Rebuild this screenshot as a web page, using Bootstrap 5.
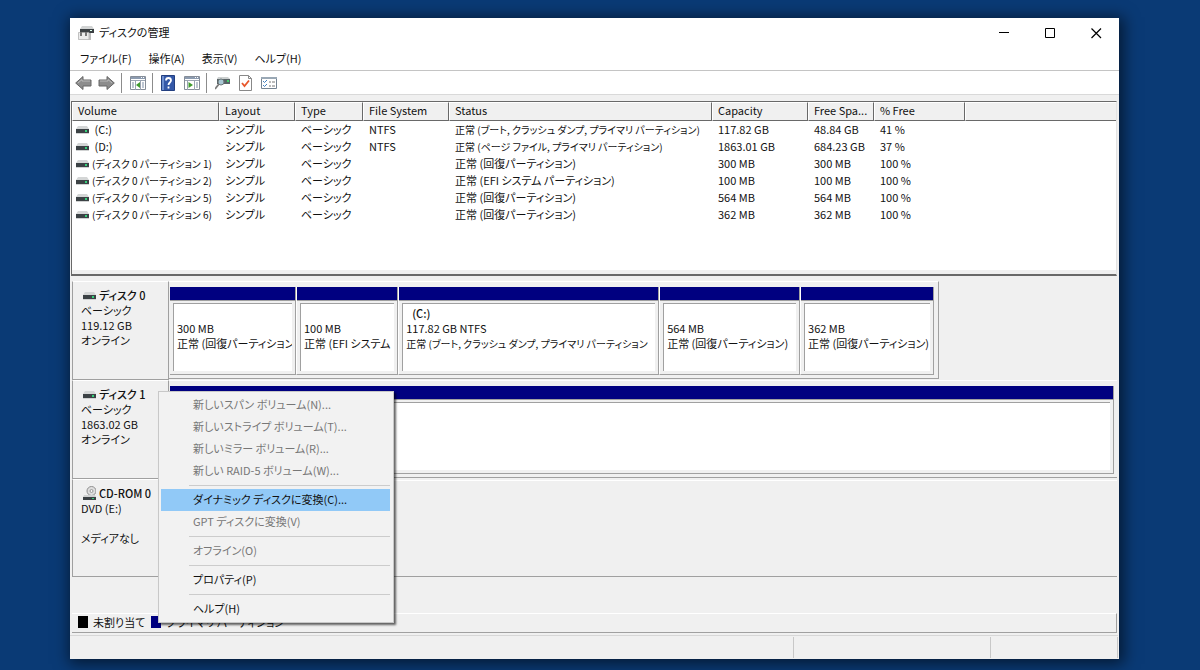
<!DOCTYPE html>
<html lang="ja">
<head>
<meta charset="utf-8">
<meta name="viewport" content="width=device-width, initial-scale=1">
<title>ディスクの管理</title>
<link href="https://cdn.jsdelivr.net/npm/bootstrap@5.3.0/dist/css/bootstrap.min.css" rel="stylesheet">
<style>
:root { --face: #f0f0f0; --line: #a0a0a0; --dark: #696969; --navy: #000080; }
body {
  background: #0a3a75; color: #111; font: 11px/15px "Noto Sans CJK JP", sans-serif;
  font-feature-settings: "palt"; padding: 18px 81px 11px 70px; min-height: 100vh;
}
.win { background: var(--face); min-height: calc(100vh - 29px); box-shadow: 2px 2px 14px 3px rgba(0,0,0,.55); }
button { background: none; border: 0; padding: 0; color: inherit; font: inherit; font-feature-settings: inherit; }
svg { display: block; flex: none; }
.kana { font-size: 10px; }
.titlebar { height: 30px; padding-left: 8px; }
.titlebar .app-name { padding: 0 0 2px 5px; }
.titlebar .cap { width: 46px; height: 30px; display: grid; place-items: center; }
.menubar { height: 22px; padding: 0 0 2px 10px; gap: 17px; }
.toolbar { height: 25px; border-top: 1px solid #c4c4c4; border-bottom: 1px solid #d9d9d9; padding-left: 5px; }
.toolbar .rule { width: 1px; height: 20px; background: #8c8c8c; margin: 0 8px 0 6px; }
.toolbar button + button { margin-left: 9px; }
.toolbar button.fwd { margin-left: 6px; }
.volumes { margin: 6px 2px 0 1px; height: 175px; background: #fff; border-top: 1px solid var(--dark); border-left: 1px solid var(--dark); border-bottom: 2px solid var(--dark); border-right: 1px solid #e3e3e3; display: flex; flex-direction: column; }
.volumes table { table-layout: fixed; width: 100%; border-collapse: separate; border-spacing: 0; }
.volumes th { height: 19px; line-height: 15px; padding: 0 0 2px 5px; font-weight: 400; background: var(--face); border-right: 1px solid var(--dark); border-bottom: 1px solid var(--dark); border-left: 1px solid #fff; border-top: 1px solid #fff; overflow: hidden; white-space: nowrap; }
.volumes th:last-child { border-right: 0; }
.volumes td { height: 17px; line-height: 17px; padding: 0 0 0 6px; white-space: nowrap; }
.volumes td:first-child { padding-left: 4px; }
.vol-name { padding-left: 3px; }
.c-vol { width: 147px; } .c-lay { width: 76px; } .c-type { width: 68px; } .c-fs { width: 86px; }
.c-stat { width: 263px; } .c-cap { width: 96px; } .c-free { width: 66px; } .c-pct { width: 91px; }
.volumes .foot { height: 4px; background: var(--face); margin-top: auto; }
.disks { padding-top: 5px; }
.disk { height: 99px; margin: 0 2px; display: flex; position: relative; }
.label-pane { width: 97px; flex: none; border-top: 1px solid #fff; border-bottom: 1px solid var(--line); border-right: 1px solid var(--line); border-left: 1px solid var(--line); padding: 6px 0 0 8px; white-space: nowrap; }
.label-pane b { font-weight: 500; }
.label-pane .head { padding-left: 2px; gap: 3px; height: 15px; }
.map { flex: 1; border-top: 1px solid #fff; border-bottom: 1px solid var(--line); padding: 5px 3px 3px 1px; margin-bottom: 1px; display: flex; }
.map.short { flex: none; width: 82%; max-width: 770px; border-right: 1px solid var(--line); padding-right: 4px; }
.part { min-width: 0; border-right: 1px solid var(--line); border-bottom: 1px solid var(--line); display: flex; flex-direction: column; }
.part + .part { border-left: 1px solid #fff; }
.part::before { content: ""; height: 14px; background: var(--navy); border-bottom: 1px solid var(--line); flex: none; }
.part > div { flex: 1; margin: 2px 3px 3px 3px; background: #fff; border-top: 1px solid var(--line); border-left: 1px solid var(--line); padding: 2px 0 0 3px; overflow: hidden; white-space: nowrap; }
.part p { margin: 0; height: 15px; overflow: hidden; }
.part p.vol { padding-left: 6px; font-weight: 500; }
.w126 { flex: 126 1 0; } .w101 { flex: 101 1 0; } .w261 { flex: 261 1 0; } .w140 { flex: 140 1 0; } .w133 { flex: 133 1 0; } .wfull { flex: 1; }
.disk.cd { height: 98px; border-bottom: 1px solid var(--line); }
.disk.cd .label-pane { border-bottom: 0; border-right: 0; width: 98px; }
.disk.cd::after { content: ""; flex: 1; margin-top: 1px; border-top: 1px solid #fff; }
.legend-bar { margin: 36px 2px 0; height: 20px; border-top: 1px solid #fff; border-bottom: 1px solid var(--line); border-right: 1px solid var(--line); padding: 0 0 2px 6px; }
.legend-bar span { padding: 0 6px 0 5px; line-height: 15px; }
.legend-bar i { width: 10px; height: 12px; background: #000; flex: none; }
.legend-bar i.pri { background: var(--navy); }
.statusbar { margin: 2px 1px 0 0; height: 24px; border-top: 1px solid #d7d7d7; padding: 1px 0; }
.statusbar div { border-right: 1px solid #c8c8c8; }
.s1 { flex: 725 1 0; } .s2 { flex: 197 1 0; } .s3 { flex: 126 1 0; }
.ctx { position: absolute; left: 86px; top: 11px; width: 236px; z-index: 5; background: #f2f2f2; border: 1px solid #c8c8c8; padding: 2px; box-shadow: 2px 2px 2px rgba(0,0,0,.6); }
.ctx button { display: block; width: 229px; height: 22px; padding: 0 0 2px 32px; text-align: left; white-space: nowrap; line-height: 20px; }
.ctx button:disabled { color: #777; }
.ctx button.hot { background: #91c9f7; }
.ctx hr { margin: 3px 0 3px 28px; border: 0; height: 1px; background: #ccc; opacity: 1; width: 201px; }
</style>
</head>
<body>
<svg width="0" height="0" class="position-absolute" aria-hidden="true">
  <symbol id="drive" viewBox="0 0 13 8"><path d="M2 0h9l2 3H0z" fill="#d4d6d6"/><path d="M0 3h13v4H0z" fill="#3c4245"/><path d="M0 7h13v1H0z" fill="#d0d2d2"/><path d="M9 4h2v2H9z" fill="#35d07a"/></symbol>
</svg>
<main class="win d-flex flex-column">
  <header class="bg-white">
    <div class="titlebar d-flex align-items-center">
      <svg width="16" height="16" viewBox="0 0 16 16"><path d="M4 1h10l2 3H2z" fill="#d2d4d4"/><path d="M2 4h14v4H2z" fill="#3b4043"/><path d="M12 5h2v1h-2z" fill="#dfe"/><path d="M.5 7.500h10.500v7H.5z" fill="#ececec" stroke="#aaa" stroke-width=".7"/><path d="M2 7h2v4H2zM7 7h2v4H7z" fill="#777"/><path d="M11 8h2v7h-2z" fill="#bbb"/></svg>
      <span class="app-name flex-fill">ディスクの管理</span>
      <button class="cap" aria-label="最小化"><svg width="11" height="11"><path d="M0 4.500h10" stroke="#000"/></svg></button>
      <button class="cap" aria-label="最大化"><svg width="11" height="11"><path d="M.5 .5h9v9h-9z" fill="none" stroke="#000"/></svg></button>
      <button class="cap" aria-label="閉じる"><svg width="11" height="11"><path d="M.5 .5l9.500 9.500M10 .5L.5 10" stroke="#000" stroke-width="1.200"/></svg></button>
    </div>
    <nav class="menubar d-flex align-items-center">
      <button>ファイル(F)</button><button>操作(A)</button><button>表示(V)</button><button>ヘルプ(H)</button>
    </nav>
    <div class="toolbar d-flex align-items-center">
      <button aria-label="戻る"><svg width="17" height="16" viewBox="0 0 17 16"><path d="M.7 8L8 1.500V5h8v6H8v3.500z" fill="#8d8d8d" stroke="#666"/><path d="M3 8l4-3.500V6h8" fill="none" stroke="#bbb"/></svg></button>
      <button class="fwd" aria-label="進む"><svg width="17" height="16" viewBox="0 0 17 16"><path d="M16.300 8L9 1.500V5H1v6h8v3.500z" fill="#8d8d8d" stroke="#666"/><path d="M14 8l-4-3.500V6H2" fill="none" stroke="#bbb"/></svg></button>
      <span class="rule"></span>
      <button aria-label="コンソール ツリー"><svg width="16" height="14" viewBox="0 0 16 14"><path d="M.5 .5h15v13H.5z" fill="#fff" stroke="#858d98"/><path d="M1 1h14v2H1z" fill="#8c9bb0"/><path d="M11 1h1v1h-1zM13 1h1v1h-1z" fill="#fff"/><path d="M1 4.500h14M5.500 5v9M10.500 5v9" stroke="#9aa4b2"/><path d="M2 7h2M2 9h2M2 11h2M12 7h2M12 9h2M12 11h2" stroke="#7c8da5"/><path d="M10 6v6L6 9z" fill="#3f9b2e"/></svg></button>
      <span class="rule"></span>
      <button aria-label="ヘルプ"><svg width="14" height="16" viewBox="0 0 14 16"><path d="M.5 .5h13v15H.5z" fill="#3458a8" stroke="#233f80"/><path d="M1 1h2v14H1z" fill="#6d8fd0"/><path d="M5 5.500Q5 3 7.500 3T10 5.500C10 7.500 7.500 7.500 7.500 10M7.500 11.500v2" fill="none" stroke="#fff" stroke-width="1.800"/></svg></button>
      <button aria-label="操作ウィンドウ"><svg width="16" height="14" viewBox="0 0 16 14"><path d="M.5 .5h15v13H.5z" fill="#fff" stroke="#858d98"/><path d="M1 1h14v2H1z" fill="#8c9bb0"/><path d="M11 1h1v1h-1zM13 1h1v1h-1z" fill="#fff"/><path d="M1 4.500h14M3.500 5v9M10.500 5v9" stroke="#9aa4b2"/><path d="M12 7h2M12 9h2M12 11h2" stroke="#7c8da5"/><path d="M4.500 6v6L9 9z" fill="#3f9b2e"/></svg></button>
      <span class="rule"></span>
      <button aria-label="再スキャン"><svg width="15" height="14" viewBox="0 0 15 14"><path d="M3 1h10l2 2H2z" fill="#ccd0d0"/><path d="M2 3h13v5H2z" fill="#596467"/><path d="M12 4h2v2h-2z" fill="#42d16c"/><circle cx="6" cy="6" r="3" fill="#a9c8d4" stroke="#6d7779"/><path d="M4 8L0 13" stroke="#7a7a7a" stroke-width="1.800"/></svg></button>
      <button aria-label="確認"><svg width="13" height="16" viewBox="0 0 13 16"><path d="M.5 .5h9l3 3v12H.5z" fill="#fff" stroke="#888"/><path d="M9.500 .5v3h3" fill="none" stroke="#888"/><path d="M3 8l2.500 3L10 5.500" fill="none" stroke="#e8562a" stroke-width="1.800"/></svg></button>
      <button aria-label="設定"><svg width="16" height="12" viewBox="0 0 16 12"><path d="M.5 .5h15v11H.5z" fill="#fff" stroke="#748392"/><path d="M0 0h16v2H0z" fill="#9aa8b5"/><path d="M2 4l1.500 1.500L6 3M2 8l1.500 1.500L6 7" fill="none" stroke="#3f7fc1"/><path d="M8 5h2M11 5h3M8 9h2M11 9h3" stroke="#777"/></svg></button>
    </div>
  </header>

  <section class="volumes">
    <table>
      <colgroup><col class="c-vol"><col class="c-lay"><col class="c-type"><col class="c-fs"><col class="c-stat"><col class="c-cap"><col class="c-free"><col class="c-pct"><col></colgroup>
      <thead><tr><th>Volume</th><th>Layout</th><th>Type</th><th>File System</th><th>Status</th><th>Capacity</th><th>Free Spa...</th><th>% Free</th><th></th></tr></thead>
      <tbody>
        <tr><td><div class="d-flex align-items-center"><svg width="13" height="8"><use href="#drive"/></svg><span class="vol-name">&nbsp;(C:)</span></div></td><td>シンプル</td><td>ベーシック</td><td>NTFS</td><td class="kana">正常 (ブート, クラッシュ ダンプ, プライマリ パーティション)</td><td>117.82 GB</td><td>48.84 GB</td><td>41 %</td><td></td></tr>
        <tr><td><div class="d-flex align-items-center"><svg width="13" height="8"><use href="#drive"/></svg><span class="vol-name">&nbsp;(D:)</span></div></td><td>シンプル</td><td>ベーシック</td><td>NTFS</td><td class="kana">正常 (ページ ファイル, プライマリ パーティション)</td><td>1863.01 GB</td><td>684.23 GB</td><td>37 %</td><td></td></tr>
        <tr><td><div class="d-flex align-items-center"><svg width="13" height="8"><use href="#drive"/></svg><span class="vol-name kana">(ディスク 0 パーティション 1)</span></div></td><td>シンプル</td><td>ベーシック</td><td></td><td>正常 (回復パーティション)</td><td>300 MB</td><td>300 MB</td><td>100 %</td><td></td></tr>
        <tr><td><div class="d-flex align-items-center"><svg width="13" height="8"><use href="#drive"/></svg><span class="vol-name kana">(ディスク 0 パーティション 2)</span></div></td><td>シンプル</td><td>ベーシック</td><td></td><td>正常 (EFI システム パーティション)</td><td>100 MB</td><td>100 MB</td><td>100 %</td><td></td></tr>
        <tr><td><div class="d-flex align-items-center"><svg width="13" height="8"><use href="#drive"/></svg><span class="vol-name kana">(ディスク 0 パーティション 5)</span></div></td><td>シンプル</td><td>ベーシック</td><td></td><td>正常 (回復パーティション)</td><td>564 MB</td><td>564 MB</td><td>100 %</td><td></td></tr>
        <tr><td><div class="d-flex align-items-center"><svg width="13" height="8"><use href="#drive"/></svg><span class="vol-name kana">(ディスク 0 パーティション 6)</span></div></td><td>シンプル</td><td>ベーシック</td><td></td><td>正常 (回復パーティション)</td><td>362 MB</td><td>362 MB</td><td>100 %</td><td></td></tr>
      </tbody>
    </table>
    <div class="foot"></div>
  </section>

  <section class="disks flex-fill">
    <div class="disk">
      <div class="label-pane"><div class="head d-flex align-items-center"><svg width="13" height="8"><use href="#drive"/></svg><b>ディスク 0</b></div>ベーシック<br>119.12 GB<br>オンライン</div>
      <div class="map short">
        <div class="part w126"><div><p></p><p>300 MB</p><p>正常 (回復パーティション</p></div></div>
        <div class="part w101"><div><p></p><p>100 MB</p><p>正常 (EFI システム</p></div></div>
        <div class="part w261"><div><p class="vol">(C:)</p><p>117.82 GB NTFS</p><p class="kana">正常 (ブート, クラッシュ ダンプ, プライマリ パーティション</p></div></div>
        <div class="part w140"><div><p></p><p>564 MB</p><p>正常 (回復パーティション)</p></div></div>
        <div class="part w133"><div><p></p><p>362 MB</p><p>正常 (回復パーティション)</p></div></div>
      </div>
    </div>
    <div class="disk">
      <div class="label-pane"><div class="head d-flex align-items-center"><svg width="13" height="8"><use href="#drive"/></svg><b>ディスク 1</b></div>ベーシック<br>1863.02 GB<br>オンライン</div>
      <div class="map"><div class="part wfull"><div></div></div></div>
      <div class="ctx" role="menu">
        <button role="menuitem" disabled>新しいスパン ボリューム(N)...</button>
        <button role="menuitem" disabled>新しいストライプ ボリューム(T)...</button>
        <button role="menuitem" disabled>新しいミラー ボリューム(R)...</button>
        <button role="menuitem" disabled>新しい RAID-5 ボリューム(W)...</button>
        <hr>
        <button role="menuitem" class="hot">ダイナミック ディスクに変換(C)...</button>
        <button role="menuitem" disabled>GPT ディスクに変換(V)</button>
        <hr>
        <button role="menuitem" disabled>オフライン(O)</button>
        <hr>
        <button role="menuitem">プロパティ(P)</button>
        <hr>
        <button role="menuitem">ヘルプ(H)</button>
      </div>
    </div>
    <div class="disk cd">
      <div class="label-pane"><div class="head d-flex align-items-center"><svg width="13" height="15" viewBox="0 0 13 15"><circle cx="8.500" cy="5" r="4.500" fill="#dedede" stroke="#8f8f8f"/><circle cx="8.500" cy="5" r="1.500" fill="#f5f5f5" stroke="#999"/><path d="M1 9h11l1 2H0z" fill="#d0d2d2"/><path d="M0 11h13v3H0z" fill="#3c4245"/><path d="M9 12h2v1H9z" fill="#35d07a"/></svg><b>CD-ROM 0</b></div>DVD (E:)<br><br>メディアなし</div>
    </div>
  </section>

  <footer>
    <div class="legend-bar d-flex align-items-center"><i></i><span>未割り当て</span><i class="pri"></i><span>プライマリ パーティション</span></div>
    <div class="statusbar d-flex"><div class="s1"></div><div class="s2"></div><div class="s3"></div></div>
  </footer>
</main>
<script src="https://cdn.jsdelivr.net/npm/bootstrap@5.3.0/dist/js/bootstrap.bundle.min.js"></script>
</body>
</html>
